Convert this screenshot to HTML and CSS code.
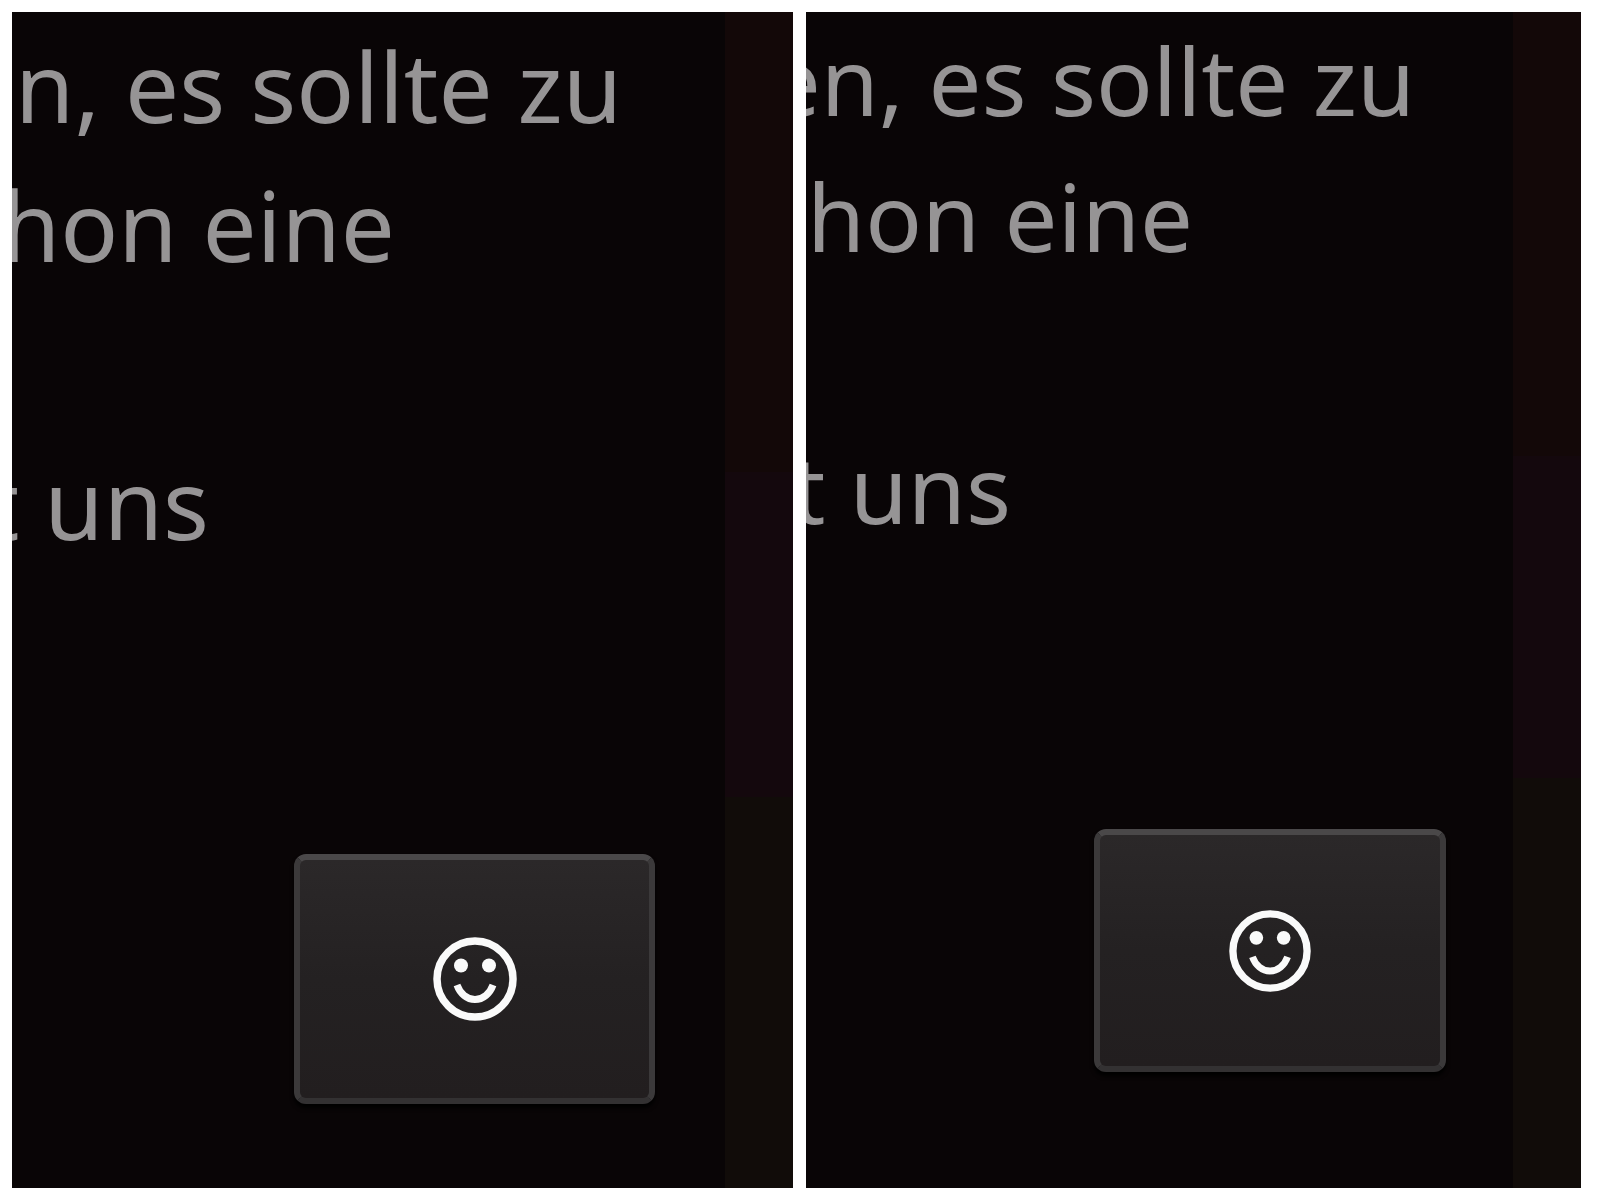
FILE: index.html
```
<!DOCTYPE html>
<html lang="de">
<head>
    <meta charset="UTF-8">
    <meta name="viewport" content="width=device-width, initial-scale=1.0">
    <title>Smiley</title>
    <link rel="stylesheet" href="styles.css">
</head>
<body>
    <main class="compare">
        <section class="panel panel-large">
            <div class="content">
                <div class="message">
                    <p class="line line-first">en, es sollte zu</p>
                    <p class="line line-second">schon eine</p>
                    <p class="line line-last">t uns</p>
                </div>
                <button class="smiley-button" type="button" aria-label="Smiley">
                    <svg class="smiley" viewBox="0 0 84 84" aria-hidden="true">
                        <circle cx="42" cy="42" r="38" fill="none" stroke="currentColor" stroke-width="7.5"/>
                        <circle cx="28" cy="28.5" r="7" fill="currentColor"/>
                        <circle cx="56" cy="28.5" r="7" fill="currentColor"/>
                        <path d="M24 48c3 8.5 10 14.5 18 14.5s15-6 18-14.5" fill="none" stroke="currentColor" stroke-width="7"/>
                    </svg>
                </button>
            </div>
            <div class="strip">
                <div class="strip-red"></div>
                <div class="strip-purple"></div>
                <div class="strip-olive"></div>
            </div>
        </section>

        <section class="panel panel-small">
            <div class="content">
                <div class="message">
                    <p class="line line-first">en, es sollte zu</p>
                    <p class="line line-second">schon eine</p>
                    <p class="line line-last">t uns</p>
                </div>
                <button class="smiley-button" type="button" aria-label="Smiley">
                    <svg class="smiley" viewBox="0 0 84 84" aria-hidden="true">
                        <circle cx="42" cy="42" r="38" fill="none" stroke="currentColor" stroke-width="7.5"/>
                        <circle cx="28" cy="28.5" r="7" fill="currentColor"/>
                        <circle cx="56" cy="28.5" r="7" fill="currentColor"/>
                        <path d="M24 48c3 8.5 10 14.5 18 14.5s15-6 18-14.5" fill="none" stroke="currentColor" stroke-width="7"/>
                    </svg>
                </button>
            </div>
            <div class="strip">
                <div class="strip-red"></div>
                <div class="strip-purple"></div>
                <div class="strip-olive"></div>
            </div>
        </section>
    </main>
</body>
</html>
```
FILE: styles.css
```
* {
    margin: 0;
    padding: 0;
    box-sizing: border-box;
}

body {
    font-family: 'Noto Sans', sans-serif;
    background-color: #fff;
    color: #969495;
}

/* Two panels side by side */
.compare {
    display: grid;
    grid-template-columns: 781fr 775fr;
    gap: 13px;
    min-height: 100vh;
    padding: 12px 18px 12px 12px;
}

.panel {
    display: grid;
    grid-template-columns: minmax(0, 1fr) 68px;
    background-color: #090506;
    overflow: hidden;
}

.content {
    display: flex;
    flex-direction: column;
    align-items: flex-end;
    justify-content: space-between;
}

/* Lines run out of the panel on the left */
.message {
    display: flex;
    flex-direction: column;
    align-items: flex-end;
    white-space: nowrap;
}

.panel-large .message {
    padding-top: 4px;
    font-size: 96px;
    line-height: 139px;
}
.panel-large .line-first {
    padding-right: 103px;
}
.panel-large .line-second {
    padding-right: 330px;
}
.panel-large .line-last {
    margin-top: 139px;
    padding-right: 516px;
}

.panel-small .message {
    font-size: 94px;
    line-height: 136px;
}
.panel-small .line-first {
    padding-right: 98px;
}
.panel-small .line-second {
    padding-right: 320px;
}
.panel-small .line-last {
    margin-top: 136px;
    padding-right: 502px;
}

/* Button */
.smiley-button {
    display: flex;
    align-items: center;
    justify-content: center;
    border: 6px solid #3b393a;
    border-top-color: #4a4849;
    border-bottom-color: #333132;
    border-radius: 12px;
    background: linear-gradient(#2b2829, #242122 50%, #221e1f);
    box-shadow: 0 4px 4px #000;
    color: #fafafa;
    cursor: pointer;
}

.panel-large .smiley-button {
    width: 361px;
    height: 250px;
    margin: 0 70px 84px 0;
}
.panel-large .smiley {
    width: 84px;
}

.panel-small .smiley-button {
    width: 352px;
    height: 243px;
    margin: 0 67px 116px 0;
}
.panel-small .smiley {
    width: 82px;
}

/* Coloured strip on the right edge */
.strip {
    display: flex;
    flex-direction: column;
}
.strip-red {
    flex: 460;
    background-color: #130808;
}
.strip-purple {
    flex: 325;
    background-color: #14080d;
}
.strip-olive {
    flex: 391;
    background-color: #110c09;
}

.panel-small .strip-red {
    flex: 444;
}
.panel-small .strip-purple {
    flex: 322;
}
.panel-small .strip-olive {
    flex: 410;
}
```
